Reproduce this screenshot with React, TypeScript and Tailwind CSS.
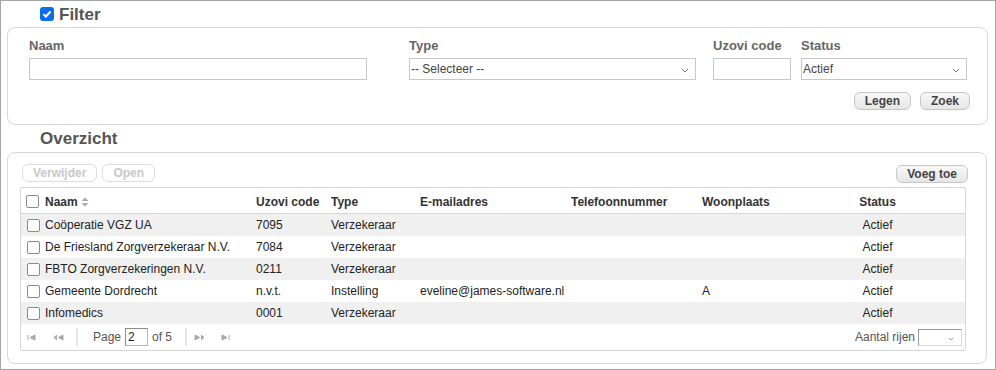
import { useState } from 'react'

interface Relatie {
  naam: string
  uzovi: string
  type: string
  email: string
  telefoon: string
  woonplaats: string
  status: string
}

const relaties: Relatie[] = [
  { naam: 'Coöperatie VGZ UA', uzovi: '7095', type: 'Verzekeraar', email: '', telefoon: '', woonplaats: '', status: 'Actief' },
  { naam: 'De Friesland Zorgverzekeraar N.V.', uzovi: '7084', type: 'Verzekeraar', email: '', telefoon: '', woonplaats: '', status: 'Actief' },
  { naam: 'FBTO Zorgverzekeringen N.V.', uzovi: '0211', type: 'Verzekeraar', email: '', telefoon: '', woonplaats: '', status: 'Actief' },
  { naam: 'Gemeente Dordrecht', uzovi: 'n.v.t.', type: 'Instelling', email: 'eveline@james-software.nl', telefoon: '', woonplaats: 'A', status: 'Actief' },
  { naam: 'Infomedics', uzovi: '0001', type: 'Verzekeraar', email: '', telefoon: '', woonplaats: '', status: 'Actief' },
]

const cols = 'grid grid-cols-[21px_211px_75px_89px_151px_131px_91px_175px]'

function Chevron({ className }: { className?: string }) {
  return (
    <svg viewBox="0 0 8 5" className={className} fill="none" stroke="#777" strokeWidth="1">
      <path d="M1 1l3 3 3-3" />
    </svg>
  )
}

function Knop({ children, disabled }: { children: React.ReactNode; disabled?: boolean }) {
  return (
    <button
      className={
        disabled
          ? 'h-[18px] px-[10px] rounded-[6px] border border-[#dcdcdc] bg-white text-[12px] leading-none font-bold text-[#c8c8c8]'
          : 'h-[18px] px-[10px] rounded-[6px] border border-[#c6c6c6] bg-gradient-to-b from-[#f8f8f8] to-[#e6e6e6] text-[12px] leading-none font-bold text-[#444]'
      }
    >
      {children}
    </button>
  )
}

function Vinkje() {
  return <span className="block w-[13px] h-[13px] rounded-[2px] border-[1.5px] border-[#8a8a8a] bg-white" />
}

function PagerIcoon({ soort }: { soort: 'first' | 'prev' | 'next' | 'last' }) {
  const paden = {
    first: 'M1 1v5M8 1L3 3.5 8 6z',
    prev: 'M4 1L1 3.5 4 6M10 1L5.5 3.5 10 6z',
    next: 'M1 1l4.5 2.5L1 6zM7 1l3 2.5L7 6',
    last: 'M1 1l5 2.5L1 6zM8 1v5',
  }
  return (
    <svg viewBox="0 0 11 7" className="w-[11px] h-[7px]" fill="#a8a8a8" stroke="#a8a8a8" strokeWidth="1">
      <path d={paden[soort]} />
    </svg>
  )
}

export default function App() {
  const [filterAan, setFilterAan] = useState(true)

  return (
    <div className="w-[996px] h-[370px] border border-[#a5a5a5] bg-white overflow-hidden font-['Liberation_Sans',Arial,sans-serif]">
      {/* filter kop */}
      <div className="h-[26px] flex items-center pl-[39px] gap-[5px]">
        <span
          onClick={() => setFilterAan(v => !v)}
          className="w-[14px] h-[14px] rounded-[3px] bg-[#0b6cf0] flex items-center justify-center"
        >
          {filterAan && (
            <svg viewBox="0 0 10 10" className="w-[10px] h-[10px]" fill="none" stroke="white" strokeWidth="2">
              <path d="M1.5 5.2l2.4 2.3 4.6-5" />
            </svg>
          )}
        </span>
        <span className="text-[17px] font-bold text-[#555] leading-none">Filter</span>
      </div>

      {/* filter paneel */}
      <div className="ml-[6px] mr-[7px] h-[98px] rounded-[8px] border border-[#d8d8d8] pt-[10px] pl-[21px] pr-[19px]">
        <div className="flex">
          <div className="w-[338px]">
            <p className="h-[15px] leading-[15px] text-[13px] font-bold text-[#666]">Naam</p>
            <input className="mt-[5px] block w-[338px] h-[22px] border border-[#c8c8c8] outline-none" />
          </div>
          <div className="ml-[42px] w-[287px]">
            <p className="h-[15px] leading-[15px] text-[13px] font-bold text-[#666]">Type</p>
            <div className="mt-[5px] relative w-[287px] h-[22px] border border-[#c8c8c8] flex items-center pl-[1px] text-[12px] text-[#444]">
              -- Selecteer --
              <Chevron className="absolute right-[6px] top-[9px] w-[8px] h-[5px]" />
            </div>
          </div>
          <div className="ml-[17px] w-[88px]">
            <p className="h-[15px] leading-[15px] text-[13px] font-bold text-[#666] whitespace-nowrap">Uzovi code</p>
            <input className="mt-[5px] block w-[78px] h-[22px] border border-[#c8c8c8] outline-none" />
          </div>
          <div className="w-[166px]">
            <p className="h-[15px] leading-[15px] text-[13px] font-bold text-[#666]">Status</p>
            <div className="mt-[5px] relative w-[166px] h-[22px] border border-[#c8c8c8] flex items-center pl-[1px] text-[12px] text-[#444]">
              Actief
              <Chevron className="absolute right-[6px] top-[9px] w-[8px] h-[5px]" />
            </div>
          </div>
        </div>
        <div className="mt-[12px] flex justify-end gap-[9px] mr-[-2px]">
          <Knop>Legen</Knop>
          <Knop>Zoek</Knop>
        </div>
      </div>

      {/* overzicht kop */}
      <div className="h-[27px] flex items-center pl-[39px]">
        <span className="text-[17px] font-bold text-[#555] leading-none">Overzicht</span>
      </div>

      {/* overzicht paneel */}
      <div className="ml-[6px] mr-[8px] h-[212px] rounded-[8px] border border-[#d8d8d8] pt-[11px] pl-[12px] pr-[20px]">
        <div className="flex items-center h-[18px]">
          <div className="flex gap-[5px] ml-[2px]">
            <Knop disabled>Verwijder</Knop>
            <Knop disabled>Open</Knop>
          </div>
          <div className="ml-auto mr-[-2px]">
            <Knop>Voeg toe</Knop>
          </div>
        </div>

        <div className="mt-[5px] border border-[#d6d6d6] rounded-[2px] text-[12px]">
          <div className={`${cols} h-[26px] items-center border-b border-[#d6d6d6] font-bold text-[#333] pt-[2px]`}>
            <div className="pl-[5px]"><Vinkje /></div>
            <div className="pl-[3px] flex items-center gap-[3px]">
              Naam
              <svg viewBox="0 0 8 10" className="w-[8px] h-[10px]" fill="#aaa">
                <path d="M4 0.5L7.5 4H0.5zM4 9.5L0.5 6H7.5z" />
              </svg>
            </div>
            <div className="pl-[3px]">Uzovi code</div>
            <div className="pl-[3px]">Type</div>
            <div className="pl-[3px]">E-mailadres</div>
            <div className="pl-[3px]">Telefoonnummer</div>
            <div className="pl-[3px]">Woonplaats</div>
            <div className="text-center">Status</div>
          </div>

          {relaties.map((r, i) => (
            <div
              key={r.naam}
              className={`${cols} h-[22px] items-center text-[#222] ${i % 2 === 0 ? 'bg-[#f0f0f0]' : 'bg-white'}`}
            >
              <div className="pl-[6px]"><Vinkje /></div>
              <div className="pl-[3px] whitespace-nowrap">{r.naam}</div>
              <div className="pl-[3px]">{r.uzovi}</div>
              <div className="pl-[3px]">{r.type}</div>
              <div className="pl-[3px] whitespace-nowrap">{r.email}</div>
              <div className="pl-[3px]">{r.telefoon}</div>
              <div className="pl-[3px]">{r.woonplaats}</div>
              <div className="text-center">{r.status}</div>
            </div>
          ))}

          {/* pager */}
          <div className="h-[26px] flex items-center text-[#555]">
            <div className="flex items-center pl-[6px] gap-[15px]">
              <PagerIcoon soort="first" />
              <PagerIcoon soort="prev" />
            </div>
            <span className="ml-[12px] w-[2px] h-[18px] bg-[#e6e6e6]" />
            <span className="ml-[15px]">Page</span>
            <span className="ml-[4px] w-[23px] h-[18px] border border-[#b5b5b5] border-t-[#8c8c8c] border-l-[#8c8c8c] bg-white pl-[2px] leading-[16px] text-[#222]">2</span>
            <span className="ml-[4px]">of 5</span>
            <span className="ml-[13px] w-[2px] h-[18px] bg-[#e6e6e6]" />
            <div className="flex items-center ml-[7px] gap-[16px]">
              <PagerIcoon soort="next" />
              <PagerIcoon soort="last" />
            </div>
            <span className="ml-auto">Aantal rijen</span>
            <span className="ml-[3px] mr-[3px] relative w-[44px] h-[17px] border border-[#d8d8d8] border-t-[#999] border-l-[#999] bg-white">
              <Chevron className="absolute right-[7px] top-[7px] w-[6px] h-[4px]" />
            </span>
          </div>
        </div>
      </div>
    </div>
  )
}
